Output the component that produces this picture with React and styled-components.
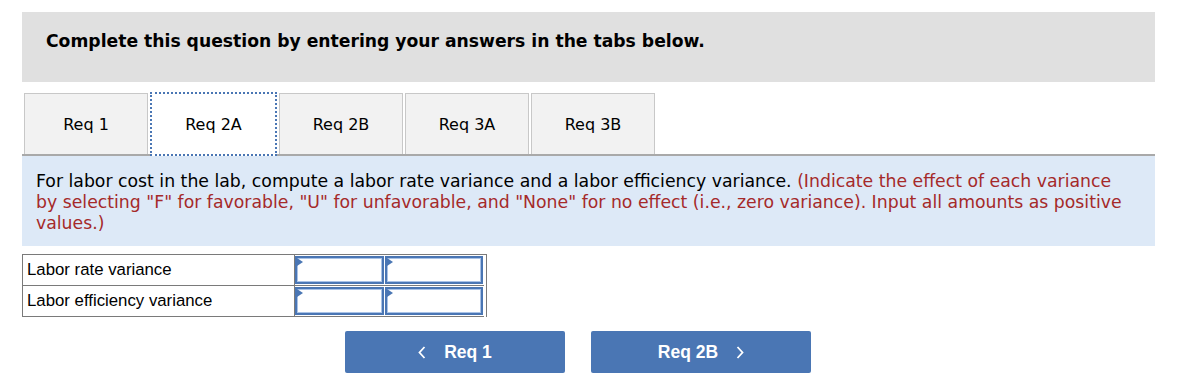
import React from 'react';
import styled, { createGlobalStyle } from 'styled-components';

const GlobalStyle = createGlobalStyle`
  body {
    margin: 0;
    background: #fff;
    font-family: "DejaVu Sans", Verdana, sans-serif;
    color: #000;
  }
`;

const Page = styled.div`
  width: 1133px;
  padding: 12px 0 0 22px;
`;

const Banner = styled.div`
  background: #e0e0e0;
  height: 70px;
  padding: 19px 0 0 24px;
  box-sizing: border-box;
  font-size: 17.2px;
  font-weight: 700;
`;

const TabRow = styled.div`
  display: flex;
  gap: 2px;
  margin-top: 11px;
  padding-left: 2px;
  border-bottom: 2px solid #a9a9a9;
`;

const Tab = styled.div`
  box-sizing: border-box;
  display: flex;
  align-items: center;
  justify-content: center;
  font-size: 16px;
  background: ${p => (p.$active ? '#fff' : '#f2f2f2')};
  border: ${p => (p.$active ? '2px dotted #4a76b4' : '1px solid #c8c8c8')};
  border-bottom: ${p => (p.$active ? '2px dotted #4a76b4' : 'none')};
  margin-bottom: ${p => (p.$active ? '-2px' : '0')};
  margin-top: ${p => (p.$active ? '-1px' : '0')};
  height: ${p => (p.$active ? '64px' : '61px')};
  width: ${p => (p.$active ? '127px' : '124px')};
`;

const Prompt = styled.div`
  background: #dde9f7;
  padding: 15px 30px 12px 14px;
  font-size: 17.3px;
  line-height: 21px;
`;

const Hint = styled.span`
  color: #a52a2a;
`;

const Grid = styled.div`
  margin-top: 8px;
  width: 463px;
  display: grid;
  grid-template-columns: 272px 90px 99px;
  border: 1px solid #7a7a7a;
  border-bottom: none;
  font-family: "Liberation Sans", Arial, sans-serif;
  font-size: 16.8px;
`;

const Label = styled.div`
  height: 31px;
  box-sizing: border-box;
  padding: 5px 0 0 4px;
  border-bottom: 1px solid #7a7a7a;
  border-right: 1px solid #7a7a7a;
`;

const Cell = styled.div`
  height: 31px;
  box-sizing: border-box;
  padding: 1px 1px 1px 0;
  border-bottom: 1px solid #7a7a7a;
`;

const Input = styled.div`
  position: relative;
  height: 100%;
  box-sizing: border-box;
  border: 2px solid #4a76b4;
  box-shadow: inset 0 0 0 1px #a9c2e6;
  background: #fff;
  &::before {
    content: '';
    position: absolute;
    top: 0;
    left: 0;
    border-top: 4px solid transparent;
    border-bottom: 4px solid transparent;
    border-left: 6px solid #4a76b4;
  }
`;

const Nav = styled.div`
  display: flex;
  gap: 26px;
  margin: 14px 0 0 323px;
`;

const NavButton = styled.div`
  width: 220px;
  height: 42px;
  border-radius: 2px;
  background: #4a76b4;
  color: #fff;
  display: flex;
  align-items: center;
  justify-content: center;
  gap: 18px;
  font-family: "Liberation Sans", Arial, sans-serif;
  font-weight: 700;
  font-size: 17.5px;
`;

const Chevron = ({ dir }) => (
  <svg width="8" height="13" viewBox="0 0 8 13">
    <path
      d={dir === 'left' ? 'M6.5 1 L1.5 6.5 L6.5 12' : 'M1.5 1 L6.5 6.5 L1.5 12'}
      fill="none"
      stroke="#fff"
      strokeWidth="1.8"
    />
  </svg>
);

const tabs = ['Req 1', 'Req 2A', 'Req 2B', 'Req 3A', 'Req 3B'];
const rows = ['Labor rate variance', 'Labor efficiency variance'];

const App = () => (
  <>
    <GlobalStyle />
    <Page>
      <Banner>Complete this question by entering your answers in the tabs below.</Banner>
      <TabRow>
        {tabs.map((t, i) => (
          <Tab key={t} $active={i === 1}>{t}</Tab>
        ))}
      </TabRow>
      <Prompt>
        For labor cost in the lab, compute a labor rate variance and a labor efficiency variance.{' '}
        <Hint>
          (Indicate the effect of each variance by selecting "F" for favorable, "U" for unfavorable, and
          "None" for no effect (i.e., zero variance). Input all amounts as positive values.)
        </Hint>
      </Prompt>
      <Grid>
        {rows.map(r => (
          <React.Fragment key={r}>
            <Label>{r}</Label>
            <Cell><Input /></Cell>
            <Cell><Input /></Cell>
          </React.Fragment>
        ))}
      </Grid>
      <Nav>
        <NavButton><Chevron dir="left" />Req 1</NavButton>
        <NavButton>Req 2B<Chevron dir="right" /></NavButton>
      </Nav>
    </Page>
  </>
);

export default App;
